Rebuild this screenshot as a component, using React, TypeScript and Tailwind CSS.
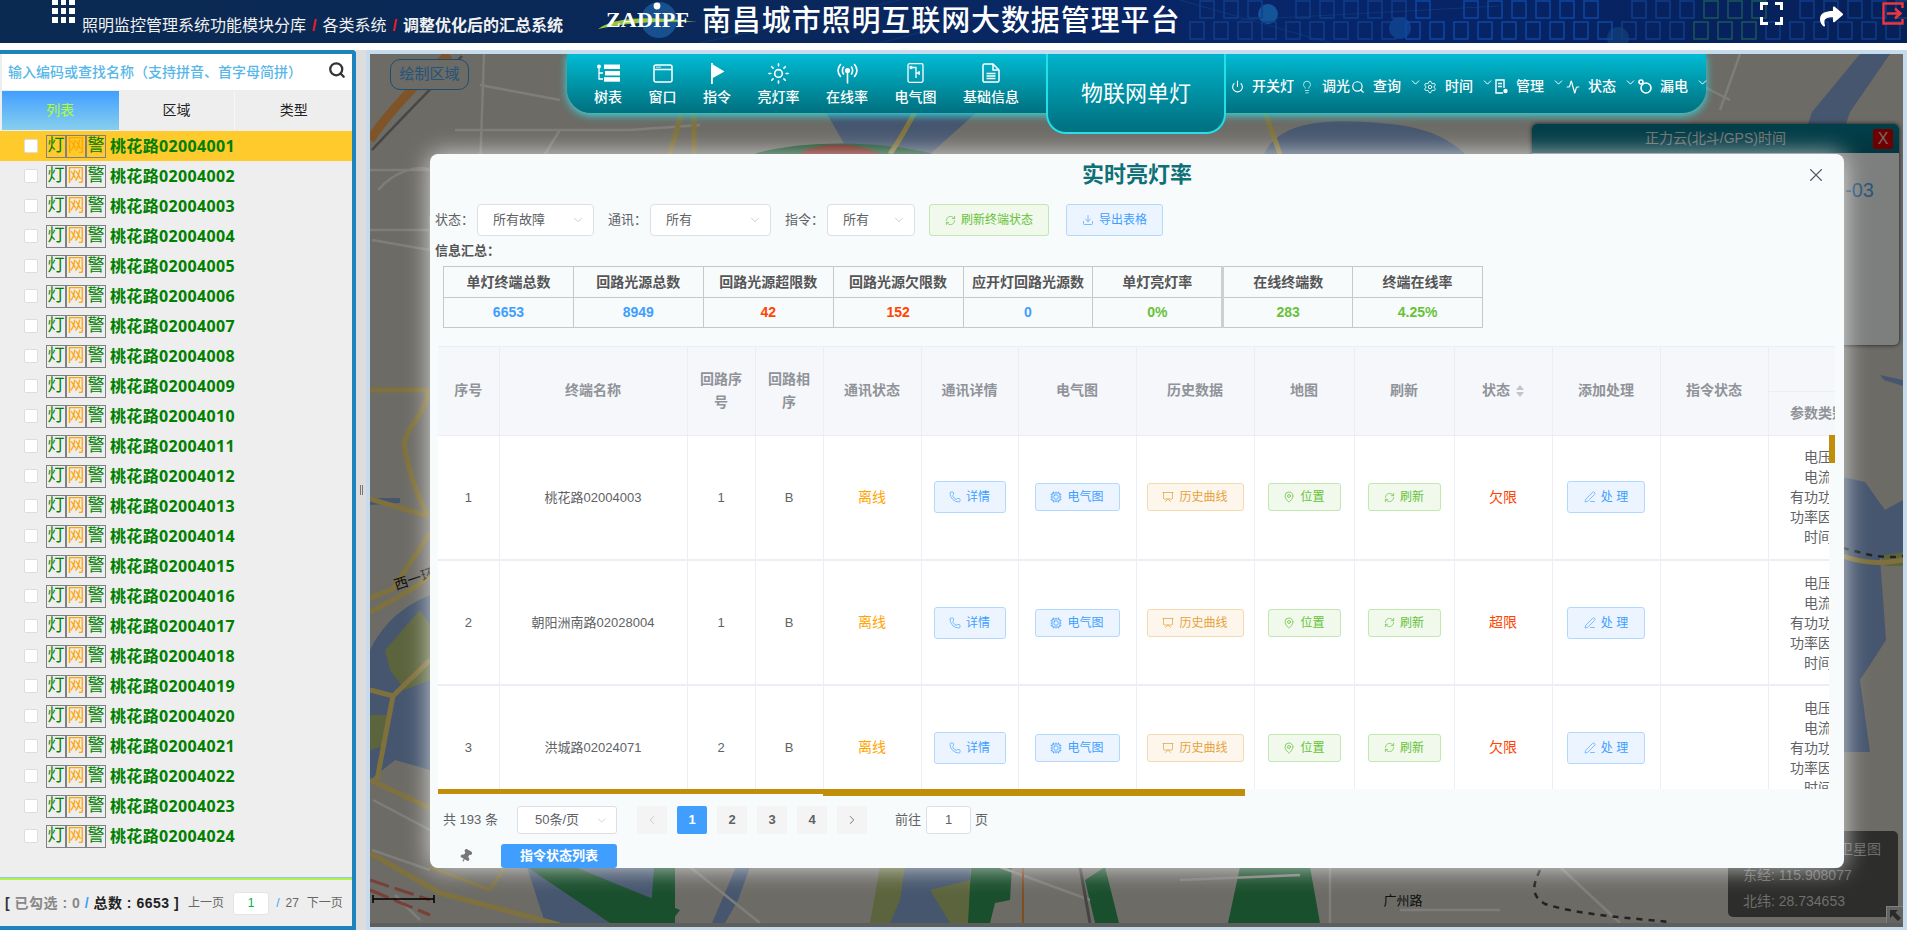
import React from 'react';
import {
  Activity,
  ChevronDown,
  ChevronLeft,
  ChevronRight,
  Cpu,
  Download,
  Lightbulb,
  MapPin,
  PenLine,
  Phone,
  Pin,
  Power,
  Presentation,
  RefreshCw,
  Search,
  Settings,
  Sun,
  X,
} from 'lucide-react';
import { FaShare } from 'react-icons/fa';

const listNames = Array.from({ length: 24 }, (_, i) => `桃花路020040${String(i + 1).padStart(2, '0')}`);

const summary = [
  { label: '单灯终端总数', value: '6653', color: 'text-[#409eff]' },
  { label: '回路光源总数', value: '8949', color: 'text-[#409eff]' },
  { label: '回路光源超限数', value: '42', color: 'text-[#ff4500]' },
  { label: '回路光源欠限数', value: '152', color: 'text-[#ff4500]' },
  { label: '应开灯回路光源数', value: '0', color: 'text-[#409eff]' },
  { label: '单灯亮灯率', value: '0%', color: 'text-[#67c23a]' },
  { label: '在线终端数', value: '283', color: 'text-[#67c23a]' },
  { label: '终端在线率', value: '4.25%', color: 'text-[#67c23a]' },
];

const rows = [
  { no: 1, name: '桃花路02004003', loop: 1, phase: 'B', state: '欠限' },
  { no: 2, name: '朝阳洲南路02028004', loop: 1, phase: 'B', state: '超限' },
  { no: 3, name: '洪城路02024071', loop: 2, phase: 'B', state: '欠限' },
];

const blueBtn = 'bg-[#ecf5ff] border-[#b3d8ff] text-[#409eff]';
const greenBtn = 'bg-[#f0f9eb] border-[#c2e7b0] text-[#67c23a]';
const orangeBtn = 'bg-[#fdf6ec] border-[#f5dab1] text-[#e6a23c]';

const CellButton = ({ tone, size, icon, children }: { tone: string; size: string; icon: React.ReactNode; children: React.ReactNode }) => (
  <div className={`mx-auto flex items-center justify-center gap-[5px] rounded-[3px] border text-[12px] ${tone} ${size}`}>
    {icon}
    <span>{children}</span>
  </div>
);

const Select = ({ text, width }: { text: string; width: string }) => (
  <div className={`flex h-[32px] items-center justify-between rounded-[4px] border border-[#dcdfe6] bg-white pl-[15px] pr-[8px] text-[13px] text-[#606266] ${width}`}>
    <span>{text}</span>
    <ChevronDown size={14} strokeWidth={1} className="text-[#a8abb2]" />
  </div>
);

const Squares = () => {
  const items: { x: number; y: number; c: string }[] = [];
  for (let i = 0; i < 30; i++) {
    const x = 1190 + i * 24;
    const c = x > 1680 && x < 1750 ? '#1c5c58' : x > 1400 && x < 1600 ? '#0f4aa8' : '#123f8c';
    items.push({ x, y: 22, c });
    if (i % 7 !== 3) items.push({ x: x + 10, y: 1, c });
  }
  return (
    <svg className="absolute inset-0 h-full w-full" viewBox="0 0 1907 43" preserveAspectRatio="none">
      <defs>
        <linearGradient id="hd" x1="0" x2="1" y1="0" y2="0">
          <stop offset="0" stopColor="#0b2a52" />
          <stop offset="0.35" stopColor="#0a2858" />
          <stop offset="0.7" stopColor="#07256a" />
          <stop offset="1" stopColor="#062058" />
        </linearGradient>
      </defs>
      <rect width="1907" height="43" fill="url(#hd)" />
      <g stroke="#123f7c" strokeWidth="1" opacity="0.7">
        <path d="M700 43 L900 0 M880 43 L1020 6 M1180 0 L1330 43 M1240 20 L1500 6" />
      </g>
      <circle cx="1268" cy="14" r="10" fill="#14559a" />
      <circle cx="1400" cy="28" r="11" fill="#0f3f88" />
      <circle cx="1618" cy="38" r="11" fill="#0f3770" />
      <g fill="none" strokeWidth="1.4">
        {items.map((s, i) => (
          <rect key={i} x={s.x} y={s.y} width="14" height="17" stroke={s.c} />
        ))}
      </g>
    </svg>
  );
};

const Header = () => (
  <header className="relative h-[43px] overflow-hidden text-white">
    <Squares />
    <div className="relative flex h-full items-start">
      <div className="ml-[52px] mt-[-1px] grid w-[23px] grid-cols-3 gap-[3px]">
        {Array.from({ length: 9 }, (_, i) => (
          <span key={i} className="h-[6px] w-[5.5px] bg-white" />
        ))}
      </div>
      <div className="ml-[7px] mt-[14px] flex items-center whitespace-nowrap text-[16px] leading-[24px] text-[#f1f1f1]">
        <span>照明监控管理系统功能模块分库</span>
        <span className="mx-[6px] font-bold text-[#ee1c25]">/</span>
        <span>各类系统</span>
        <span className="mx-[6px] font-bold text-[#ee1c25]">/</span>
        <span className="font-bold">调整优化后的汇总系统</span>
      </div>
      <div className="relative ml-[34px] mt-[1px] h-[38px] w-[102px] shrink-0">
        <svg className="absolute inset-0" width="102" height="38" viewBox="0 0 102 38">
          <circle cx="62" cy="19" r="18" fill="#17508e" />
          <path d="M1 28 C20 14 60 16 100 21 C70 20 30 21 1 28Z" fill="#9bc53d" />
          <circle cx="60" cy="5" r="3.4" fill="#ffffff" />
        </svg>
        <span className="absolute left-[9px] top-[5px] font-['Liberation_Serif',serif] text-[22px] font-bold leading-[28px] tracking-[0.2px] text-white">ZADIPF</span>
      </div>
      <div className="ml-[3px] mt-[2px] whitespace-nowrap text-[29px] font-medium leading-[38px] tracking-[0.9px]">南昌城市照明互联网大数据管理平台</div>
      <div className="ml-auto mr-[3px] mt-[2px] flex items-start">
        <svg width="23" height="23" viewBox="0 0 23 23" fill="none" stroke="#fff" strokeWidth="3">
          <path d="M1.5 8V1.5H8M15 1.5h6.5V8M21.5 15v6.5H15M8 21.5H1.5V15" />
        </svg>
        <FaShare className="ml-[37px] mt-[3px] text-[23px] text-white" />
        <svg className="ml-[39px]" width="22" height="23" viewBox="0 0 22 23" fill="none" stroke="#f0353b" strokeWidth="2.4">
          <path d="M20.5 6V1.5H1.5V21.5H20.5V17M5 11.5H18M13 6.5L18.5 11.5L13 16.5" />
        </svg>
      </div>
    </div>
  </header>
);

const LeftPanel = () => (
  <aside className="flex h-full w-[356px] shrink-0 flex-col rounded-tr-[4px] border-y-4 border-r-4 border-[#1e82bd] bg-[#eeeeee]">
    <div className="ml-[2px] flex h-[36px] shrink-0 items-center justify-between bg-white pl-[6px] pr-[6px]">
      <span className="whitespace-nowrap text-[14px] font-medium text-[#58b7e8]">输入编码或查找名称（支持拼音、首字母简拼）</span>
      <Search size={18} strokeWidth={3} className="mt-[-4px] text-[#333]" />
    </div>
    <div className="ml-[2px] mt-[1px] grid h-[39px] shrink-0 grid-cols-3 text-[14px]">
      <div className="flex items-center justify-center bg-gradient-to-b from-[#409eff] to-[#87cfee] text-[#adff2f]">列表</div>
      <div className="flex items-center justify-center border-r border-[#f7f7f7] text-[#222]">区域</div>
      <div className="flex items-center justify-center text-[#222]">类型</div>
    </div>
    <div className="mt-[1px] flex-1">
      {listNames.map((name, i) => (
        <div key={name} className={`flex h-[30px] items-center pl-[24px] ${i === 0 ? 'bg-[#ffca2c]' : ''}`}>
          <span className="h-[14px] w-[14px] rounded-[2px] border border-[#dddddd] bg-white" />
          <div className="ml-[8px] flex">
            <span className="flex h-[23px] w-[20px] items-center justify-center border border-[#808080] text-[17px] text-[#008000]">灯</span>
            <span className="flex h-[23px] w-[20px] items-center justify-center border border-[#808080] text-[17px] text-[#ffa500]">网</span>
            <span className="flex h-[23px] w-[20px] items-center justify-center border border-[#808080] text-[17px] text-[#008000]">警</span>
          </div>
          <span className="ml-[4px] whitespace-nowrap font-['Noto_Sans','Noto_Sans_CJK_SC',sans-serif] text-[16px] font-bold tracking-[0.35px] text-[#008000]">{name}</span>
        </div>
      ))}
    </div>
    <div className="shrink-0 border-t border-[#8fc8ea]">
      <div className="h-[2px] bg-[#b4f04a]" />
      <div className="flex h-[46px] items-center pl-[5px] text-[12px] text-[#666]">
        <span className="whitespace-nowrap text-[14px] font-bold tracking-[0.5px] text-[#888]">
          <span className="text-[#333]">[ </span>已勾选 : 0 <span className="text-[#409eff]">/</span> <span className="text-[#222]">总数 : 6653 ]</span>
        </span>
        <span className="ml-[9px]">上一页</span>
        <span className="ml-[9px] flex h-[23px] w-[36px] items-center justify-center rounded-[3px] border border-[#e4e4e4] bg-white text-[#00b050]">1</span>
        <span className="ml-[7px] text-[#409eff]">/</span>
        <span className="ml-[6px]">27</span>
        <span className="ml-[8px]">下一页</span>
      </div>
    </div>
  </aside>
);

const Splitter = () => (
  <div className="flex h-full w-[10px] shrink-0 items-center justify-center gap-[1px] bg-[#dddddd]">
    <span className="h-[10px] w-[1px] bg-[#777]" />
    <span className="h-[10px] w-[1px] bg-[#777]" />
  </div>
);

const MapDrawing = () => (
  <svg className="block h-full w-full" viewBox="370 54 1533 873" preserveAspectRatio="none">
    <rect x="370" y="54" width="1533" height="873" fill="#d8d6cc" />
    <g fill="#8cacdc">
      <path d="M826 112H977L930 154H850Z" />
      <path d="M1264 154C1280 120 1330 118 1390 124C1430 128 1450 140 1465 154Z" />
      <path d="M1812 112L1860 54H1890L1850 112L1836 154H1798Z" />
      <path d="M1843 477L1865 482L1885 510L1903 500V558H1880L1886 640L1860 680L1870 752L1843 752Z" />
      <path d="M1880 375L1903 380V386L1884 380Z" />
      <path d="M527 867H654L660 923H545Z" />
      <path d="M736 867L750 867L738 900L725 923H712Z" />
      <path d="M370 498H400V503L370 505Z" />
      <path d="M370 650C390 610 420 600 430 595V770L395 760L370 780Z" />
      <path d="M880 867H970V923H880Z" />
    </g>
    <g fill="#b9c97a">
      <path d="M385 650L420 610L430 625V680L405 690L390 670Z" />
      <path d="M880 867H905L900 900L890 923H870Z" />
      <path d="M930 890L970 880V923H950Z" />
      <path d="M1880 556L1903 552V566L1885 566Z" />
      <path d="M370 715H388L385 745L370 750Z" />
    </g>
    <g fill="#349e5a">
      <path d="M527 867H575L680 910L670 923H610Z" />
      <path d="M654 867H675L675 923H650Z" />
      <path d="M971 867H1012L1010 900L995 903L990 923H968Z" />
      <path d="M1085 880L1105 867L1119 923H1095Z" />
      <path d="M1228 923L1240 867H1310L1320 923Z" />
      <path d="M754 154C800 140 880 140 933 154Z" />
    </g>
    <path d="M805 150C830 142 860 143 880 154H800Z" fill="#e04030" />
    <g fill="none" stroke="#fdfbf3" strokeWidth="2.5">
      <path d="M484 54L480 170M480 85L560 100M455 130H630L700 125M560 130L545 154M630 60L700 58M1000 40L900 100" />
      <path d="M370 170H430M378 190C395 170 420 165 430 170M370 230H430M372 240L430 250M430 215V250" />
      <path d="M1640 54L1730 100M1740 54L1720 110" />
      <path d="M373 800L430 830M372 850L430 870M395 895L420 920" />
      <path d="M690 867L760 923M1000 867L1090 900M1180 880L1300 875M1330 867V923M1560 867L1620 923M1400 910H1500" />
    </g>
    <g fill="none" stroke="#ffe37a" strokeWidth="5">
      <path d="M682 112L670 154M694 112L694 154M915 112C905 130 900 140 890 154" />
      <path d="M370 390H428C425 420 400 430 405 449C410 480 420 500 428 516M370 499L428 516" />
      <path d="M370 598L393 589L430 533M370 612L393 600C410 590 420 585 430 575" />
      <path d="M393 696L377 780M370 690L393 696L430 660M370 780L430 808" />
      <path d="M370 853L440 893M440 893L560 925" />
      <path d="M1265 112L1280 154M1843 556C1870 566 1890 562 1903 560" />
      <path d="M430 867L490 890L505 867" strokeWidth="3" />
    </g>
    <path d="M370 140C390 110 420 80 449 54" fill="none" stroke="#ffa850" strokeWidth="9" />
    <path d="M372 150C400 120 430 90 462 56" fill="none" stroke="#8c8c8c" strokeWidth="2.5" />
    <path d="M370 880L430 900M370 890L430 915" fill="none" stroke="#f08070" strokeWidth="3" strokeDasharray="20 6" />
    <path d="M1540 870C1533 885 1530 895 1545 904C1580 915 1630 918 1670 922M1843 548C1860 552 1880 560 1903 556" fill="none" stroke="#444" strokeWidth="2.5" strokeDasharray="6 6" />
    <path d="M1023 867V923" stroke="#ff9c40" strokeWidth="2" />
    <path d="M1080 867L1090 923" stroke="#888" strokeWidth="3" />
    <path d="M373 899H434M373 895V903M434 895V903" stroke="#000" strokeWidth="1.5" />
    <rect x="370" y="923" width="1533" height="4" fill="#bcbcb8" />
    <text x="1403" y="905" fontSize="13" fill="#222" textAnchor="middle">广州路</text>
    <text transform="translate(396 590) rotate(-18)" fontSize="14" fill="#222">西一环</text>
  </svg>
);

const ToolItem = ({ icon, label }: { icon: React.ReactNode; label: string }) => (
  <div className="flex flex-col items-center">
    <div className="flex h-[26px] items-center justify-center">{icon}</div>
    <span className="mt-[1px] whitespace-nowrap text-[14px] font-medium leading-[20px]">{label}</span>
  </div>
);

const MenuItem = ({ icon, label, chevron, after }: { icon: React.ReactNode; label: string; chevron?: boolean; after: string }) => (
  <div className={`flex shrink-0 items-center ${after}`}>
    <span className="flex w-[14px] justify-center">{icon}</span>
    <span className="ml-[8px] whitespace-nowrap text-[14px] font-medium">{label}</span>
    {chevron && <ChevronDown size={13} strokeWidth={1.8} className="ml-[8px] mt-[-8px]" />}
  </div>
);

const Toolbar = () => (
  <div className="absolute left-[197px] top-0 z-20 flex h-[59px] w-[1139px] items-start rounded-b-[24px] bg-gradient-to-b from-[#00bcd4] to-[#00707f] text-white shadow-[0_2px_9px_#36dfe6]">
    <div className="ml-[27px] mt-[6px] flex shrink-0 gap-[26.5px]">
      <ToolItem
        label="树表"
        icon={
          <svg width="23" height="18" viewBox="0 0 23 18" fill="#fff">
            <circle cx="2" cy="2.5" r="2" />
            <path d="M2 3V15H6M2 9H6" fill="none" stroke="#fff" strokeWidth="1.3" />
            <rect x="7" y="0.5" width="16" height="4.5" />
            <rect x="8" y="7" width="15" height="4.5" />
            <rect x="7" y="13.2" width="16" height="4.5" />
          </svg>
        }
      />
      <ToolItem
        label="窗口"
        icon={
          <svg width="20" height="19" viewBox="0 0 20 19" fill="none" stroke="#fff" strokeWidth="1.5">
            <rect x="1" y="1" width="18" height="17" rx="2" />
            <path d="M1 5.5H19" />
            <path d="M3.5 3.2H8" strokeDasharray="1 1" />
          </svg>
        }
      />
      <ToolItem
        label="指令"
        icon={
          <svg width="15" height="21" viewBox="0 0 15 21" fill="#fff">
            <rect x="1" y="0" width="1.8" height="21" />
            <path d="M2 1L14.5 8.5L2 15.5Z" />
          </svg>
        }
      />
      <ToolItem label="亮灯率" icon={<Sun size={23} strokeWidth={1.7} />} />
      <ToolItem
        label="在线率"
        icon={
          <svg width="21" height="21" viewBox="0 0 21 21" fill="none" stroke="#fff" strokeWidth="1.6">
            <circle cx="10.5" cy="7.5" r="1.8" fill="#fff" />
            <path d="M10.5 8V20.5" />
            <path d="M6.8 11.5C5 9 5 6 6.8 3.5M14.2 3.5C16 6 16 9 14.2 11.5M3.8 14C0.4 10 0.4 5 3.8 1M17.2 1C20.6 5 20.6 10 17.2 14" />
          </svg>
        }
      />
      <ToolItem
        label="电气图"
        icon={
          <svg width="17" height="20" viewBox="0 0 17 20" fill="none" stroke="#fff" strokeWidth="1.3">
            <rect x="1" y="0.7" width="15" height="18.6" rx="1.5" />
            <path d="M4 4.5H9V15M9 10H13M12 8V12" />
            <circle cx="4" cy="4.5" r="1" fill="#fff" />
          </svg>
        }
      />
      <ToolItem
        label="基础信息"
        icon={
          <svg width="18" height="20" viewBox="0 0 18 20" fill="none" stroke="#fff" strokeWidth="1.5">
            <path d="M1 2.5C1 1.5 1.6 1 2.5 1H11L17 7V17.5C17 18.5 16.4 19 15.5 19H2.5C1.6 19 1 18.5 1 17.5Z" />
            <path d="M11 1V7H17M4.5 10.5H13.5M4.5 13H13.5M4.5 15.5H13.5" />
          </svg>
        }
      />
    </div>
    <div className="ml-[27px] flex h-[80px] w-[180px] shrink-0 items-center justify-center rounded-b-[20px] border-x-2 border-b-2 border-[#20e0e8] bg-gradient-to-b from-[#00b4cc] to-[#006f7e] text-[22px]">物联网单灯</div>
    <div className="ml-[4px] mt-[22px] flex shrink-0">
      <MenuItem label="开关灯" after="mr-[6px]" icon={<Power size={13} strokeWidth={2} />} />
      <MenuItem label="调光" after="mr-[1px]" icon={<Lightbulb size={14} strokeWidth={1.5} className="text-[#bfeef2]" />} />
      <MenuItem label="查询" chevron after="mr-[1px]" icon={<Search size={14} strokeWidth={2} />} />
      <MenuItem label="时间" chevron after="mr-[0px]" icon={<Settings size={14} strokeWidth={1.6} />} />
      <MenuItem
        label="管理"
        chevron
        after="mr-[1px]"
        icon={
          <svg width="13" height="15" viewBox="0 0 13 15" fill="none" stroke="#fff" strokeWidth="1.4">
            <path d="M8 14H1V1H9V9M3 4.5H7M3 7.5H7" />
            <circle cx="10.5" cy="12" r="1.5" fill="#fff" />
          </svg>
        }
      />
      <MenuItem label="状态" chevron after="mr-[1px]" icon={<Activity size={14} strokeWidth={2} />} />
      <MenuItem
        label="漏电"
        chevron
        after=""
        icon={
          <svg width="14" height="15" viewBox="0 0 14 15" fill="none" stroke="#fff" strokeWidth="1.6">
            <circle cx="8" cy="9" r="5" />
            <circle cx="3" cy="3" r="2" />
          </svg>
        }
      />
    </div>
  </div>
);

const SummaryTable = () => (
  <table className="ml-[13px] w-[1040px] table-fixed border-collapse text-[14px] font-bold">
    <tbody>
      <tr className="h-[31px] text-[#555]">
        {summary.map((s, i) => (
          <td key={s.label} className={`whitespace-nowrap border border-[#c8c8c8] text-center ${i === 6 ? 'border-l-[3px] border-l-[#cfcfcf]' : ''}`}>{s.label}</td>
        ))}
      </tr>
      <tr className="h-[30px]">
        {summary.map((s, i) => (
          <td key={s.label} className={`border border-[#c8c8c8] text-center ${s.color} ${i === 6 ? 'border-l-[3px] border-l-[#cfcfcf]' : ''}`}>{s.value}</td>
        ))}
      </tr>
    </tbody>
  </table>
);

const thClass = 'border-b border-r border-[#ebeef5] px-[10px] text-center align-middle text-[14px] font-bold leading-[23px] text-[#909399]';
const tdClass = 'border-b-2 border-r border-[#ebeef5] text-center align-middle text-[13px] text-[#606266]';

const DataTable = () => (
  <div className="relative ml-[8px] w-[1397px]">
    <div className="h-[443px] overflow-hidden border-t border-[#ebeef5]">
      <table className="w-[1500px] table-fixed border-collapse bg-white">
        <colgroup>
          <col className="w-[61px]" />
          <col className="w-[188px]" />
          <col className="w-[68px]" />
          <col className="w-[68px]" />
          <col className="w-[98px]" />
          <col className="w-[97px]" />
          <col className="w-[118px]" />
          <col className="w-[118px]" />
          <col className="w-[100px]" />
          <col className="w-[100px]" />
          <col className="w-[98px]" />
          <col className="w-[108px]" />
          <col className="w-[108px]" />
          <col className="w-[100px]" />
          <col className="w-[70px]" />
        </colgroup>
        <thead className="bg-[#f5f7fa]">
          <tr className="h-[44px]">
            <th rowSpan={2} className={thClass}>序号</th>
            <th rowSpan={2} className={thClass}>终端名称</th>
            <th rowSpan={2} className={thClass}>回路序号</th>
            <th rowSpan={2} className={thClass}>回路相序</th>
            <th rowSpan={2} className={thClass}>通讯状态</th>
            <th rowSpan={2} className={thClass}>通讯详情</th>
            <th rowSpan={2} className={thClass}>电气图</th>
            <th rowSpan={2} className={thClass}>历史数据</th>
            <th rowSpan={2} className={thClass}>地图</th>
            <th rowSpan={2} className={thClass}>刷新</th>
            <th rowSpan={2} className={thClass}>
              <span className="inline-flex items-center gap-[6px]">
                状态
                <span className="flex flex-col gap-[2px]">
                  <span className="h-0 w-0 border-x-[4px] border-b-[5px] border-x-transparent border-b-[#c0c4cc]" />
                  <span className="h-0 w-0 border-x-[4px] border-t-[5px] border-x-transparent border-t-[#c0c4cc]" />
                </span>
              </span>
            </th>
            <th rowSpan={2} className={thClass}>添加处理</th>
            <th rowSpan={2} className={thClass}>指令状态</th>
            <th colSpan={2} className={thClass}></th>
          </tr>
          <tr className="h-[44px]">
            <th className={`${thClass} whitespace-nowrap`}>参数类别</th>
            <th className={thClass}></th>
          </tr>
        </thead>
        <tbody>
          {rows.map((r) => (
            <tr key={r.no} className="h-[125px]">
              <td className={tdClass}>{r.no}</td>
              <td className={tdClass}>{r.name}</td>
              <td className={tdClass}>{r.loop}</td>
              <td className={tdClass}>{r.phase}</td>
              <td className={`${tdClass} text-[14px] text-[#ffa500]`}>离线</td>
              <td className={tdClass}>
                <CellButton tone={blueBtn} size="h-[32px] w-[72px]" icon={<Phone size={12} strokeWidth={1.3} />}>详情</CellButton>
              </td>
              <td className={tdClass}>
                <CellButton tone={blueBtn} size="h-[28px] w-[85px]" icon={<Cpu size={12} strokeWidth={1.5} />}>电气图</CellButton>
              </td>
              <td className={tdClass}>
                <CellButton tone={orangeBtn} size="h-[28px] w-[97px]" icon={<Presentation size={12} strokeWidth={1.5} />}>历史曲线</CellButton>
              </td>
              <td className={tdClass}>
                <CellButton tone={greenBtn} size="h-[28px] w-[73px]" icon={<MapPin size={12} strokeWidth={1.5} />}>位置</CellButton>
              </td>
              <td className={tdClass}>
                <CellButton tone={greenBtn} size="h-[28px] w-[73px]" icon={<RefreshCw size={11} strokeWidth={1.5} />}>刷新</CellButton>
              </td>
              <td className={`${tdClass} text-[14px] text-[#ff4500]`}>{r.state}</td>
              <td className={tdClass}>
                <CellButton tone={blueBtn} size="h-[32px] w-[78px]" icon={<PenLine size={12} strokeWidth={1.3} />}>处 理</CellButton>
              </td>
              <td className={tdClass}></td>
              <td className={`${tdClass} text-[14px] leading-[20px] text-[#666]`}>
                <div>电压</div>
                <div>电流</div>
                <div>有功功率</div>
                <div>功率因数</div>
                <div>时间</div>
              </td>
              <td className={tdClass}></td>
            </tr>
          ))}
        </tbody>
      </table>
    </div>
    <div className="flex items-start">
      <div className="h-[5px] w-[385px] bg-[#c08e08]" />
      <div className="h-[7px] w-[422px] bg-[#c08e08]" />
    </div>
    <div className="absolute right-0 top-[89px] h-[361px] w-[6px] bg-[#f8fbfc]">
      <div className="h-[28px] w-[6px] bg-[#c08e08]" />
    </div>
  </div>
);

const PageBtn = ({ children, active, dim }: { children: React.ReactNode; active?: boolean; dim?: boolean }) => (
  <span
    className={`flex h-[28px] w-[30px] items-center justify-center rounded-[2px] text-[13px] font-bold ${
      active ? 'bg-[#409eff] text-white' : dim ? 'bg-[#f4f4f5] text-[#c0c4cc]' : 'bg-[#f4f4f5] text-[#606266]'
    }`}
  >
    {children}
  </span>
);

const Modal = () => (
  <div className="absolute left-[60px] top-[100px] z-30 flex h-[714px] w-[1414px] flex-col rounded-[8px] bg-[#f8fbfc] shadow-[0_0_24px_rgba(255,255,255,0.75)]">
    <div className="relative flex h-[50px] shrink-0 items-start justify-center pt-[6px]">
      <h2 className="text-[22px] font-bold leading-[30px] text-[#0f7078]">实时亮灯率</h2>
      <X size={22} strokeWidth={1.2} className="absolute right-[17px] top-[10px] text-[#555a66]" />
    </div>
    <div className="flex h-[32px] shrink-0 items-center pl-[5px] text-[13px] text-[#606266]">
      <span className="w-[42px]">状态：</span>
      <Select text="所有故障" width="w-[117px]" />
      <span className="ml-[14px] w-[42px]">通讯：</span>
      <Select text="所有" width="w-[121px]" />
      <span className="ml-[14px] w-[42px]">指令：</span>
      <Select text="所有" width="w-[88px]" />
      <div className={`ml-[14px] flex h-[32px] w-[120px] items-center justify-center gap-[5px] rounded-[3px] border text-[12px] ${greenBtn}`}>
        <RefreshCw size={11} strokeWidth={1.5} />
        刷新终端状态
      </div>
      <div className={`ml-[17px] flex h-[32px] w-[97px] items-center justify-center gap-[5px] rounded-[3px] border text-[12px] ${blueBtn}`}>
        <Download size={12} strokeWidth={1.3} />
        导出表格
      </div>
    </div>
    <div className="flex h-[30px] shrink-0 items-center pl-[5px] text-[13px] font-bold text-[#555]">信息汇总：</div>
    <SummaryTable />
    <div className="h-[18px] shrink-0" />
    <DataTable />
    <div className="mt-[10px] flex h-[28px] shrink-0 items-center text-[13px] text-[#606266]">
      <span className="ml-[13px] w-[74px]">共 193 条</span>
      <div className="flex h-[28px] w-[100px] items-center justify-between rounded-[3px] border border-[#dcdfe6] bg-white pl-[17px] pr-[8px]">
        <span>50条/页</span>
        <ChevronDown size={13} strokeWidth={1} className="text-[#a8abb2]" />
      </div>
      <div className="ml-[20px] flex gap-[10px]">
        <PageBtn dim><ChevronLeft size={14} strokeWidth={1.5} /></PageBtn>
        <PageBtn active>1</PageBtn>
        <PageBtn>2</PageBtn>
        <PageBtn>3</PageBtn>
        <PageBtn>4</PageBtn>
        <PageBtn><ChevronRight size={14} strokeWidth={1.5} /></PageBtn>
      </div>
      <span className="ml-[28px]">前往</span>
      <span className="ml-[5px] flex h-[28px] w-[45px] items-center justify-center rounded-[3px] border border-[#dcdfe6] bg-white">1</span>
      <span className="ml-[4px]">页</span>
    </div>
    <div className="mt-[10px] flex h-[24px] shrink-0 items-center">
      <Pin size={14} className="ml-[29px] rotate-[30deg] fill-[#777] text-[#777]" />
      <div className="ml-[28px] flex h-[24px] w-[116px] items-center justify-center rounded-[3px] bg-[#409eff] text-[13px] font-bold text-white">指令状态列表</div>
    </div>
  </div>
);

const MapArea = () => (
  <div className="h-full min-w-0 flex-1 bg-[#c6dced] pb-[3px] pl-[4px] pr-[4px] pt-[4px]">
    <div className="relative h-full w-full overflow-hidden">
      <MapDrawing />
      <div className="absolute left-[20px] top-[5px] flex h-[31px] w-[79px] items-center justify-center rounded-[10px] border border-[#3f9be0] bg-[#d8d6cc] text-[15px] text-[#4aa8f4]">绘制区域</div>
      <div className="absolute left-[1162px] top-[70px] flex h-[221px] w-[367px] flex-col rounded-[5px] bg-[#fbffff] shadow-[0_0_4px_#333]">
        <div className="relative flex h-[29px] shrink-0 items-center justify-center rounded-t-[5px] bg-gradient-to-b from-[#007f96] to-[#006c7e] text-[14px] text-[#e0e0e0]">
          正力云(北斗/GPS)时间
          <span className="absolute right-[6px] top-[5px] flex h-[20px] w-[20px] items-center justify-center rounded-[2px] bg-[#e00000] text-[16px] text-[#f0d0d0]">X</span>
        </div>
        <div className="pl-[313px] pt-[24px] text-[20px] leading-[26px] text-[#5aa8f0]">-03</div>
      </div>
      <div className="absolute left-[1358px] top-[777px] h-[86px] w-[170px] rounded-[5px] bg-[#5a5a56] text-[14px] leading-[26px] text-[#dcdcd6]">
        <div className="pr-[17px] pt-[5px] text-right">卫星图</div>
        <div className="pl-[15px]">东经: 115.908077</div>
        <div className="pl-[15px]">北纬: 28.734653</div>
      </div>
      <div className="absolute left-[1516px] top-[852px] flex h-[17px] w-[17px] items-center justify-center border-l border-t border-[#fff] bg-[#c8c8c4]">
        <svg width="11" height="11" viewBox="0 0 11 11" fill="#555">
          <path d="M0 0H8L5.5 2.5L11 8L8 11L2.5 5.5L0 8Z" />
        </svg>
      </div>
      <div className="absolute inset-0 z-10 bg-black/50" />
      <Toolbar />
      <Modal />
    </div>
  </div>
);

export default function App() {
  return (
    <div className="flex h-[930px] w-[1907px] flex-col overflow-hidden bg-white font-['Liberation_Sans','Noto_Sans_CJK_SC',sans-serif]">
      <Header />
      <div className="mt-[7px] flex h-[880px]">
        <LeftPanel />
        <Splitter />
        <MapArea />
      </div>
    </div>
  );
}
